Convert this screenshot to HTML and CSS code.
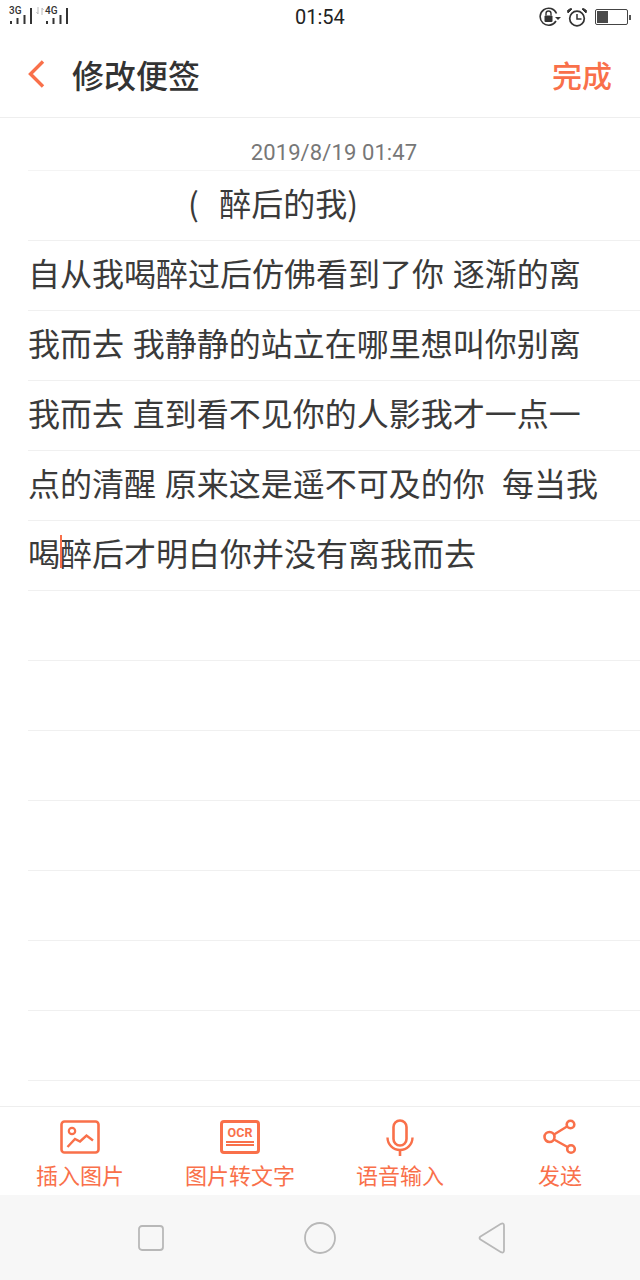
FILE: index.html
```html
<!DOCTYPE html>
<html lang="zh-CN">
<head>
  <meta charset="UTF-8" />
  <meta name="viewport" content="width=device-width, initial-scale=1.0"/>
  <title>修改便签</title>
  <link rel="stylesheet" href="styles.css">
</head>
<body>
  <div class="phone">
    <div class="status">
      <div class="signal">
        <div class="sim"><span class="sim-label">3G</span>
          <svg width="23" height="16" viewBox="0 0 23 16"><path d="M1 13v3M7.500 10v6M14.500 7v9M21 0v16" stroke="#333" stroke-width="2"/></svg>
        </div>
        <svg class="data" width="8" height="8" viewBox="0 0 8 8"><path d="M2 0v7M0.500 5l1.500 2M6 8V1M7.500 3L6 1" stroke="#bbb" stroke-width="1" fill="none"/></svg>
        <div class="sim"><span class="sim-label">4G</span>
          <svg width="23" height="16" viewBox="0 0 23 16"><path d="M1 13v3M7.500 10v6M14.500 7v9M21 0v16" stroke="#333" stroke-width="2"/></svg>
        </div>
      </div>
      <div class="clock">01:54</div>
      <div class="status-icons">
        <svg width="22" height="20" viewBox="0 0 22 20">
          <path d="M17.500 6.500A8.500 8.500 0 1 0 17 14" fill="none" stroke="#333" stroke-width="1.600"/>
          <path d="M16 10h6l-3 3z" fill="#333"/>
          <rect x="5.500" y="8.500" width="8" height="6.500" rx="1" fill="#333"/>
          <path d="M7 8.500V6.500a2.500 2.500 0 0 1 5 0v2" fill="none" stroke="#333" stroke-width="1.400"/>
        </svg>
        <svg width="20" height="19" viewBox="0 0 20 19">
          <circle cx="10" cy="10.500" r="7.300" fill="none" stroke="#333" stroke-width="1.700"/>
          <path d="M10 6v5h4.500" fill="none" stroke="#333" stroke-width="1.500"/>
          <path d="M1 5l4-4-1.500-.5L.5 2.500zM19 5l-4-4 1.500-.5 3 2z" fill="#333" stroke="#333"/>
        </svg>
        <div class="battery">
          <div class="battery-body"><div class="battery-level"></div></div>
          <div class="battery-tip"></div>
        </div>
      </div>
    </div>

    <header class="topbar">
      <div class="topbar-left">
        <svg class="back" width="18" height="30" viewBox="0 0 18 30"><path d="M15 2.500L2.500 15 15 27.500" fill="none" stroke="#f9704a" stroke-width="3.400"/></svg>
        <h1 class="page-title">修改便签</h1>
      </div>
      <button class="done">完成</button>
    </header>

    <main class="note">
      <div class="note-date">2019/8/19 01:47</div>
      <div class="note-lines">
        <div class="line line-title">(  醉后的我)</div>
        <div class="line">自从我喝醉过后仿佛看到了你 逐渐的离</div>
        <div class="line">我而去 我静静的站立在哪里想叫你别离</div>
        <div class="line">我而去 直到看不见你的人影我才一点一</div>
        <div class="line">点的清醒 原来这是遥不可及的你  每当我</div>
        <div class="line">喝<span class="caret"></span>醉后才明白你并没有离我而去</div>
        <div class="line"></div>
        <div class="line"></div>
        <div class="line"></div>
        <div class="line"></div>
        <div class="line"></div>
        <div class="line"></div>
        <div class="line"></div>
      </div>
    </main>

    <footer class="toolbar">
      <div class="tool">
        <div class="tool-icon">
          <svg width="40" height="34" viewBox="0 0 40 34">
            <rect x="1.500" y="1.500" width="37" height="31" rx="3" fill="none" stroke="#f9704a" stroke-width="2.600"/>
            <circle cx="12" cy="11" r="3.200" fill="none" stroke="#f9704a" stroke-width="2.200"/>
            <path d="M7.500 27l7.500-8 5 2.500 6.500-6 6.500 5" fill="none" stroke="#f9704a" stroke-width="2.400"/>
          </svg>
        </div>
        <span class="tool-label">插入图片</span>
      </div>
      <div class="tool">
        <div class="tool-icon">
          <div class="ocr-icon">
            <span class="ocr-text">OCR</span>
            <i class="ocr-rule"></i>
            <i class="ocr-rule"></i>
          </div>
        </div>
        <span class="tool-label">图片转文字</span>
      </div>
      <div class="tool">
        <div class="tool-icon">
          <svg width="28" height="37" viewBox="0 0 28 37">
            <rect x="7.500" y="1.500" width="13" height="25" rx="6.500" fill="none" stroke="#f9704a" stroke-width="2.600"/>
            <path d="M1.500 18.500a12.500 12.500 0 0 0 25 0" fill="none" stroke="#f9704a" stroke-width="2.400"/>
            <path d="M14 31v6" stroke="#f9704a" stroke-width="2.600"/>
          </svg>
        </div>
        <span class="tool-label">语音输入</span>
      </div>
      <div class="tool">
        <div class="tool-icon">
          <svg width="36" height="36" viewBox="0 0 36 36">
            <circle cx="7.500" cy="18" r="5" fill="none" stroke="#f9704a" stroke-width="2.600"/>
            <circle cx="28.500" cy="5.500" r="3.800" fill="none" stroke="#f9704a" stroke-width="2.600"/>
            <circle cx="29" cy="30" r="3.800" fill="none" stroke="#f9704a" stroke-width="2.600"/>
            <path d="M12 15.500L25 7.500M12 20.500L25.500 28" stroke="#f9704a" stroke-width="2.400"/>
          </svg>
        </div>
        <span class="tool-label">发送</span>
      </div>
    </footer>

    <nav class="navbar">
      <svg width="26" height="26" viewBox="0 0 26 26"><rect x="1" y="1" width="24" height="24" rx="3" fill="none" stroke="#b8b8b8" stroke-width="1.800"/></svg>
      <svg width="32" height="32" viewBox="0 0 32 32"><circle cx="16" cy="16" r="15" fill="none" stroke="#b8b8b8" stroke-width="1.800"/></svg>
      <svg class="nav-back" width="28" height="32" viewBox="0 0 28 32"><path d="M2.500 14.500L23 1.800q3-1.300 3 2v24.400q0 3.300-3 2L2.500 17.500q-2-1.500 0-3z" fill="none" stroke="#b8b8b8" stroke-width="1.800"/></svg>
    </nav>
  </div>
</body>
</html>
```

FILE: styles.css
```css
body {
  margin: 0;
  background-color: #fff;
  font-family: "Noto Sans CJK SC", "Noto Sans", sans-serif;
  color: #333;
}

.phone {
  width: 640px;
  height: 1280px;
  display: flex;
  flex-direction: column;
  overflow: hidden;
}

/* status bar */
.status {
  height: 34px;
  padding: 0 9px 0 10px;
  display: flex;
  justify-content: space-between;
  align-items: center;
  position: relative;
}

.signal {
  display: flex;
  align-items: flex-start;
  align-self: flex-start;
  margin-top: 8px;
  height: 16px;
}

.sim {
  position: relative;
  width: 26px;
  height: 16px;
  flex: none;
}

.sim svg {
  display: block;
}

.sim-label {
  position: absolute;
  left: -1px;
  top: -1px;
  font-family: Roboto, sans-serif;
  font-size: 10px;
  font-weight: 500;
  line-height: 8px;
  color: #333;
}

.data {
  flex: none;
  margin: -1px 2px 0 0;
}

.clock {
  position: absolute;
  left: 295px;
  top: 5px;
  font-family: Roboto, sans-serif;
  font-size: 20px;
  line-height: 24px;
  color: #222;
}

.status-icons {
  display: flex;
  align-items: center;
  gap: 6px;
}

.battery {
  display: flex;
  align-items: center;
  gap: 1px;
  margin-left: 2px;
}

.battery-body {
  box-sizing: border-box;
  width: 33px;
  height: 16px;
  padding: 1px;
  border: 1px solid #444;
  border-radius: 2px;
}

.battery-level {
  width: 11px;
  height: 12px;
  background-color: #4a4a4a;
}

.battery-tip {
  width: 2px;
  height: 5px;
  background-color: #555;
}

/* top bar */
.topbar {
  height: 79px;
  padding: 0 28px 4px 28px;
  display: flex;
  justify-content: space-between;
  align-items: center;
  border-bottom: 1px solid #eee;
}

.topbar-left {
  display: flex;
  align-items: center;
  gap: 26px;
}

.back {
  display: block;
}

.page-title {
  margin: 0;
  font-size: 32px;
  font-weight: 500;
  line-height: 46px;
  color: #333;
}

.done {
  padding: 0;
  border: none;
  background: none;
  font-family: inherit;
  font-size: 30px;
  font-weight: 500;
  line-height: 46px;
  color: #f9704a;
}

/* note body */
.note {
  flex: 1;
  padding-left: 28px;
}

.note-date {
  height: 52px;
  border-bottom: 1px solid #f4f4f4;
  font-family: Roboto, sans-serif;
  font-size: 22px;
  letter-spacing: 0.1px;
  line-height: 70px;
  text-align: center;
  color: #777;
}

.line {
  height: 69px;
  border-bottom: 1px solid #f0f0f0;
  font-size: 32px;
  line-height: 62px;
  word-spacing: 1.500px;
  white-space: pre;
  color: #3a3a3a;
}

.line-title {
  padding-left: 160px;
  word-spacing: 3px;
}

.caret {
  display: inline-block;
  width: 2px;
  height: 33px;
  margin: 0 -1px 0 -1px;
  position: relative;
  left: 1px;
  vertical-align: -2px;
  background-color: #f9704a;
}

/* bottom toolbar */
.toolbar {
  height: 88px;
  display: grid;
  grid-template-columns: repeat(4, 160px);
  border-top: 1px solid #eee;
}

.tool {
  padding-top: 11px;
  display: flex;
  flex-direction: column;
  align-items: center;
  gap: 2px;
}

.tool-icon {
  height: 38px;
  display: flex;
  align-items: center;
}

.tool-label {
  height: 32px;
  font-size: 22px;
  line-height: 32px;
  color: #f9704a;
}

.ocr-icon {
  box-sizing: border-box;
  width: 40px;
  height: 34px;
  padding: 2px 3px;
  border: 3px solid #f9704a;
  border-radius: 4px;
  display: flex;
  flex-direction: column;
  align-items: center;
  gap: 1px;
}

.ocr-text {
  font-family: Roboto, sans-serif;
  font-size: 12.500px;
  font-weight: 700;
  line-height: 15px;
  color: #f9704a;
}

.ocr-rule {
  display: block;
  width: 100%;
  height: 2px;
  background-color: #f9704a;
}

/* system navigation */
.navbar {
  height: 85px;
  padding-left: 138px;
  display: flex;
  align-items: center;
  gap: 140px;
  background-color: #f7f7f7;
}

.nav-back {
  margin-left: 2px;
}
```
